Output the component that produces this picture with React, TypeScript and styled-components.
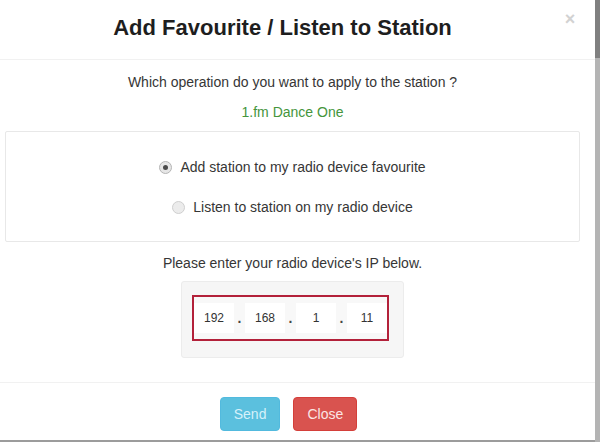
import React, { useState } from "react";
import styled, { createGlobalStyle } from "styled-components";

const GlobalStyle = createGlobalStyle`
  html, body {
    margin: 0;
    padding: 0;
  }
  body {
    font-family: "Liberation Sans", Arial, Helvetica, sans-serif;
    font-size: 14px;
    color: #333;
  }
`;

const Screen = styled.div`
  width: 600px;
  height: 442px;
  overflow: hidden;
  display: flex;
  align-items: flex-start;
  background: #9c9c9c;
`;

const Modal = styled.div`
  width: 605px;
  height: 440px;
  margin-left: -10px;
  flex: none;
  display: flex;
  flex-direction: column;
  background: #fff;
`;

const Backdrop = styled.div`
  flex: 1;
  align-self: stretch;
  background: linear-gradient(to bottom, #808080 0 58px, #b4b4b4 58px 100%);
`;

const Header = styled.div`
  height: 60px;
  box-sizing: border-box;
  padding: 14px 15px 0 15px;
  display: flex;
  align-items: flex-start;
  border-bottom: 1px solid #f1f1f1;
`;

const Title = styled.h4`
  flex: 1;
  margin: 0;
  text-align: center;
  font-size: 22px;
  line-height: 28px;
  font-weight: bold;
  color: #1e1e1e;
`;

const CloseX = styled.button`
  border: 0;
  background: none;
  padding: 0;
  margin-top: -5px;
  width: 20px;
  font-family: inherit;
  font-size: 18px;
  font-weight: bold;
  line-height: 20px;
  color: #d2d2d2;
  cursor: pointer;
`;

const Body = styled.div`
  padding: 12px 15px 0 15px;
  display: flex;
  flex-direction: column;
  align-items: center;
`;

const Line = styled.p<{ $tone?: "green" }>`
  margin: 0;
  line-height: 20px;
  text-align: center;
  color: ${(p) => (p.$tone === "green" ? "#45953c" : "#363636")};
`;

const Question = styled(Line)`
  margin-bottom: 10px;
`;

const Panel = styled.div`
  align-self: stretch;
  margin-top: 9px;
  padding: 25px 0 24px 0;
  border: 1px solid #e8e8e8;
  border-radius: 2px;
  display: flex;
  flex-direction: column;
  align-items: center;
  gap: 20px;
`;

const RadioRow = styled.label`
  display: flex;
  align-items: center;
  gap: 8px;
  line-height: 20px;
  color: #363636;
  cursor: pointer;
`;

const RadioDot = styled.span<{ $on: boolean }>`
  width: 11px;
  height: 11px;
  border-radius: 50%;
  border: 1px solid ${(p) => (p.$on ? "#b5b5b5" : "#cfcfcf")};
  background: ${(p) => (p.$on ? "#e6e6e6" : "#ececec")};
  display: flex;
  align-items: center;
  justify-content: center;

  &::after {
    content: "";
    width: 5px;
    height: 5px;
    border-radius: 50%;
    background: ${(p) => (p.$on ? "#4a4a4a" : "transparent")};
  }
`;

const Hint = styled(Line)`
  margin-top: 11px;
`;

const Well = styled.div`
  margin-top: 8px;
  width: 223px;
  height: 77px;
  box-sizing: border-box;
  padding: 13px 14px 0 10px;
  background: #f6f6f6;
  border: 1px solid #ececec;
  border-radius: 3px;
`;

const IpBox = styled.div`
  height: 46px;
  box-sizing: border-box;
  border: 2px solid #b3213a;
  background: #f8f8f8;
  display: flex;
  align-items: center;
  justify-content: center;
`;

const Octet = styled.input`
  width: 40px;
  height: 30px;
  box-sizing: border-box;
  border: 0;
  padding: 0;
  background: #fff;
  text-align: center;
  font-family: inherit;
  font-size: 12px;
  color: #333;
  outline: none;
`;

const Dot = styled.span`
  width: 11px;
  text-align: center;
  font-size: 14px;
  font-weight: bold;
  color: #444;
  line-height: 30px;
`;

const Footer = styled.div`
  margin-top: auto;
  height: 58px;
  box-sizing: border-box;
  padding-top: 14px;
  border-top: 1px solid #f1f1f1;
  display: flex;
  justify-content: center;
  gap: 13px;
  padding-right: 8px;
`;

const Btn = styled.button<{ $kind: "info" | "danger" }>`
  height: 34px;
  padding: 0 13px;
  border-radius: 4px;
  font-family: inherit;
  font-size: 14px;
  cursor: pointer;
  border: 1px solid ${(p) => (p.$kind === "info" ? "#52bade" : "#d43f3a")};
  background: ${(p) => (p.$kind === "info" ? "#5bc0de" : "#d9534f")};
  color: ${(p) => (p.$kind === "info" ? "#d6f1fa" : "#fbe6e5")};
`;

const octets = ["192", "168", "1", "11"];

export default function App() {
  const [mode, setMode] = useState<"fav" | "listen">("fav");
  const [ip, setIp] = useState<string[]>(octets);

  const setOctet = (i: number, v: string) =>
    setIp((prev) => prev.map((o, j) => (j === i ? v : o)));

  return (
    <>
      <GlobalStyle />
      <Screen>
        <Modal>
          <Header>
            <Title>Add Favourite / Listen to Station</Title>
            <CloseX aria-label="close">×</CloseX>
          </Header>
          <Body>
            <Question>Which operation do you want to apply to the station ?</Question>
            <Line $tone="green">1.fm Dance One</Line>
            <Panel>
              <RadioRow onClick={() => setMode("fav")}>
                <RadioDot $on={mode === "fav"} />
                Add station to my radio device favourite
              </RadioRow>
              <RadioRow onClick={() => setMode("listen")}>
                <RadioDot $on={mode === "listen"} />
                Listen to station on my radio device
              </RadioRow>
            </Panel>
            <Hint>Please enter your radio device's IP below.</Hint>
            <Well>
              <IpBox>
                {ip.map((o, i) => (
                  <React.Fragment key={i}>
                    {i > 0 && <Dot>.</Dot>}
                    <Octet value={o} onChange={(e) => setOctet(i, e.target.value)} />
                  </React.Fragment>
                ))}
              </IpBox>
            </Well>
          </Body>
          <Footer>
            <Btn $kind="info">Send</Btn>
            <Btn $kind="danger">Close</Btn>
          </Footer>
        </Modal>
        <Backdrop />
      </Screen>
    </>
  );
}
